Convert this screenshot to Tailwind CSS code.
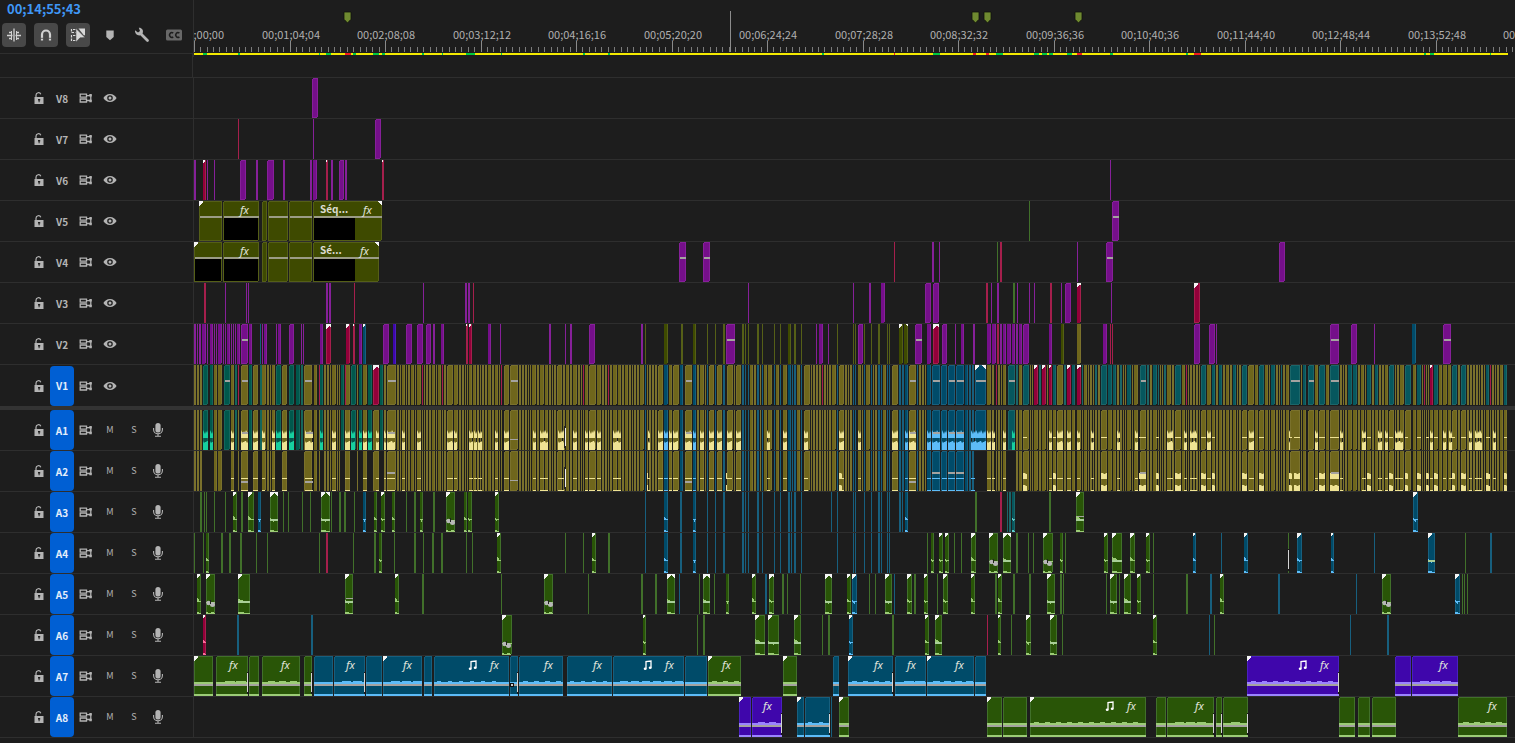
<!DOCTYPE html>
<html lang="fr">
<head>
<meta charset="utf-8">
<title>Timeline</title>
<script src="https://cdn.jsdelivr.net/npm/@tailwindcss/browser@4"></script>
</head>
<body class="min-h-screen overflow-hidden bg-[#1d1d1d] font-['Noto_Sans_CJK_JP','Noto_Sans',sans-serif] text-[#b4b4b4]">

<svg class="hidden">
  <symbol id="i-lock" viewBox="0 0 12 14"><path d="M3 6.500V4.200a2.500 2.500 0 0 1 4.800-1" fill="none" stroke="currentColor" stroke-width="1.200"/><path fill-rule="evenodd" fill="currentColor" d="M1.500 6h9v7h-9zM5 8v1.400h.6v1.800h1V9.400h.6V8z"/></symbol>
  <symbol id="i-sync" viewBox="0 0 14 12"><path d="M1.200 2.200h6.300v3H1.200zM1.200 7h6.300v3H1.200zM7.500 3.700h4.300v4.800H7.500" fill="none" stroke="currentColor" stroke-width="1.300"/><path d="M10.300 2h2.500v2.500h-2.500zM10.300 7.800h2.500v2.500h-2.500z" fill="currentColor"/></symbol>
  <symbol id="i-eye" viewBox="0 0 14 10"><path fill-rule="evenodd" fill="currentColor" d="M7 1C10 1 12.500 3 13.600 5 12.500 7 10 9 7 9S1.500 7 .4 5C1.500 3 4 1 7 1zM7 2.200a2.800 2.800 0 1 0 0 5.600 2.800 2.800 0 0 0 0-5.600z"/><circle cx="7" cy="5" r="1.500" fill="currentColor"/></symbol>
  <symbol id="i-mic" viewBox="0 0 12 16"><rect x="3.400" y="1" width="5.200" height="9.500" rx="2.600" fill="currentColor"/><path d="M1.600 6v1.500a4.400 4.400 0 0 0 8.800 0V6M6 12v2M3 14.300h6" fill="none" stroke="currentColor" stroke-width="1.100"/></symbol>
  <symbol id="i-note" viewBox="0 0 10 11"><path d="M3 8.500V1.500l5-.5v6.500" fill="none" stroke="currentColor" stroke-width="1.300"/><ellipse cx="2.200" cy="8.800" rx="1.500" ry="1.200" fill="currentColor"/><ellipse cx="7.200" cy="7.800" rx="1.500" ry="1.200" fill="currentColor"/></symbol>
  <symbol id="i-pin" viewBox="0 0 9 13"><path d="M1 1h7v7.200L4.500 12 1 8.200z" fill="currentColor" stroke="#10130a" stroke-width=".8"/></symbol>
</svg>

<main>
  <div class="flex h-[54px]">
    <div class="w-[193px] shrink-0 border-b border-[#2e2e2e]">
      <div class="h-[23px] pl-[7px] text-[13px] leading-[18px] font-bold text-[#3f97f5]">00;14;55;43</div>
      <div class="flex gap-2 pl-0.5">
        <button aria-label="Insert as nest" class="grid size-6 place-items-center rounded bg-[#484848] text-[#d2d2d2]"><svg class="size-4" viewBox="0 0 16 16" fill="none" stroke="currentColor"><path d="M8 1.500v13" stroke-width="1.300"/><path d="M3 5.500h3M1 8.500h5.500M3 11.500h3M10 5.500h3M9.500 8.500H15M10 11.500h3" stroke-width="1.300"/><path d="M5.500 4v9M10.500 4v9" stroke-width="1"/></svg></button>
        <button aria-label="Snap" class="grid size-6 place-items-center rounded bg-[#484848] text-[#d2d2d2]"><svg class="size-4" viewBox="0 0 16 16" fill="none" stroke="currentColor" stroke-width="2.200"><path d="M4 13.500V7.500a4 4 0 0 1 8 0v6"/><path d="M2.500 11.300h3M10.500 11.300h3" stroke="#484848" stroke-width=".8"/></svg></button>
        <button aria-label="Linked selection" class="grid size-6 place-items-center rounded bg-[#484848] text-[#d8d8d8]"><svg class="size-4" viewBox="0 0 16 16"><path d="M5.500 2.500h-4v3h4M5.500 8.500h-4v5h4" fill="none" stroke="currentColor" stroke-width="1.200" stroke-dasharray="2.500 1"/><path d="M8.500 1.500H15V8l-1 .5z" fill="currentColor"/><path d="M6 1.500l9 9-5 .3L6 15z" fill="currentColor" stroke="#484848" stroke-width=".5"/></svg></button>
        <button aria-label="Add marker" class="grid size-6 place-items-center"><svg class="size-3" viewBox="0 0 12 12"><path d="M2.300 1.500h7.400V8L6 11.300 2.300 8z" fill="currentColor"/></svg></button>
        <button aria-label="Timeline settings" class="grid size-6 place-items-center"><svg class="size-4" viewBox="0 0 16 16"><path d="M7.500 7.500L13.500 13.500" stroke="currentColor" stroke-width="2.800" stroke-linecap="round"/><path d="M1 3.200l3 2.300L6 4 4.800.8C7.500.5 9.700 3 8.800 5.800 8 8.300 5.500 9 3.500 8 1.700 7 .7 5 1 3.200z" fill="currentColor"/></svg></button>
        <button aria-label="Captions" class="grid size-6 place-items-center text-[#686868]"><svg class="h-3 w-4" viewBox="0 0 16 12"><rect x="0" y=".5" width="16" height="11" rx="1.500" fill="currentColor"/><path d="M7.200 4a2.400 2.400 0 1 0 0 4M13.400 4a2.400 2.400 0 1 0 0 4" fill="none" stroke="#1d1d1d" stroke-width="1.600"/></svg></button>
      </div>
    </div>
    <div id="ruler" class="relative h-[57px] flex-1 overflow-hidden border-l border-[#2e2e2e] text-[11px] leading-[14px] text-[#b0b0b0]"></div>
  </div>
  <div class="flex h-6 border-b border-[#2e2e2e]"><div class="w-[193px] shrink-0 border-r border-[#2e2e2e]"></div></div>
  <div id="tracks"></div>
</main>

<script>
const START = 194;
const COLORS = {
  p: ['#750f8a', '#862099', '#a050b0'], r: ['#93003a', '#a51f4c', '#ff6a9a'],
  t: ['#00584c', '#14665c', '#17cf9f'], k: ['#06575e', '#1b6669', '#5cc8c8'],
  y: ['#6f661c', '#7a712c', '#efe394'], b: ['#004b69', '#175f7e', '#5dbcf8'],
  g: ['#295507', '#41702a', '#9ccc76'], o: ['#3e4a00', '#555f17', '#9a9a70'],
  v: ['#3f06ab', '#4a20c0', '#9b83ff'], x: ['#1d1d1d', '#1d1d1d', '#1d1d1d']
};
// Clip notation: colour, start, width, then marks:
// - level line, / and \ corner handles, ~ waveform, q keyframes, T title bar, B black picture, A full audio, f fx, m music, | fade
const V1 = 't203,5 t210,3 y218,4 t224,6- t235,2 r238 y241,7- t249,3 y253,5 t260,2 y262,4 y272,3 t276,5 y282,5 t289,5 t296,4 t301,2 y304,8- y314,3 r319 t320,3 y332,4 t341,3 r345 y346,4 t351,5 t359,3 y363,4 t368,4 r373,6/\\ t380,3 y384,2 y387,9- y402,3 y417,4 r422 r442 y447,6 y454,4 y469,3 y495,3 r501 y504,5 y510,8- y532,4 y540,4 y545,3 y557,5 y573,4 r583 y585,3 y589,7 y597,4 r608 y613,4 y618,3 b645 y658,5 b664,4 y669,3 y673,6 b680,3 y685,7- b693,3 y700,4 b707 y709,5 b715 y717,5 b723,2 y727,6 y736,5 b742,2 b745 b748 b757,2 b762 y768,4 b774 b780 y783,4 b788,3 b792 b794,2 b801 y804,6 r822 b837 y839,5 b853 b855 y858,3 b864 b871 b878,2 b881 b887 b889 y892,6 b899,2 b902,2 b905,3 y909,7- b917 b927,4 b932,8- b941,6 b948,7- b956,8- b965,3 b969,2 b972,2 b975,11-/\\ y987,4 y992,2 r996 y1003,3 t1008,7- t1016,2 t1023,6 r1034,4/ t1039,2 r1042,4/ r1049,3/ t1053,3 y1057,6 t1064,2 r1067,4/ t1072,3 r1077,4/\\ t1082 t1095,2 t1101,6 t1108,4 t1113,3 t1120,2 t1127,4 y1134,4 t1140,6- t1147,2 t1153,4 t1158 t1164,2 y1167,4 t1175,6 r1186 t1201,5 y1207,4 t1212,3 t1219,3 t1233,3 t1242,5 y1248,6 t1259,5 t1271,4 t1281 t1290,10- t1303,3 t1308,6- t1319,6 t1330,9- t1348,4 t1353,4 t1367,4 t1375,3 t1389,5 t1405,6 y1413,3 t1417,4 r1424 r1430,3/ t1434,4 y1443,4 t1452,5 t1461,5 t1486,3 r1490 t1504,3';
const A1W = 't203,5 t210,3 y231,3 y241,7- y253,5 y262,3 y272,3 t276,5 y282,5 t289,5 y305,8- t320,3 y332,4 y345,5 t351,4 t359,3 y363,4 t368,4 y376,3 y384,2 y387,8- y402,3 y417,4 y447,6 y454,3 y469,4 y474,3 y478,4 y495,3 y504,5 y533,3 y540,8 y558,6 y573,4 y585,3 y589,6 y597,4 y613,8 y648,2 y658,5 b664,4 y669,3 y673,5 y685,7- b693,3 y700,4 y709,5 y717,5 y727,5 y736,5 y767,3 y783,4 y804,4 y839,5 y858,3 y892,6 b905,3 y909,7- b927,4 b932,8- b942,5 b948,7- b956,8- b971,15 y987,4 y992,3 y1003,3 t1012,3 y1049,3 y1057,6 y1067,4 y1077,3 y1091,3 y1117,3 y1135,3 y1167,6 y1184,3 y1190,7 y1207,4 y1249,5 y1289,1 y1315,3 y1340,3 y1362,4 y1378,4 y1385,3 y1395,8 y1430,3 y1443,3 y1449,3 y1469,3 y1475,7 y1493,3';
const A2W = 'y647,1 y726,1 y839,3 y1023,4 y1053,3 y1101,6 y1139,7- y1156,3 y1175,6 y1201,5 y1212,3 y1242,5 y1259,5 y1289,3 y1294,6 y1319,6 y1330,9- y1367,4 y1389,4 y1405,3 y1417,4 y1426,3 y1434,4 y1452,3 y1461,5 y1486,4 y1504,3';
const SHARED_B = 'b645 b664,4~ b680,2 b693,3~ b707 b715 b723,2 b742,2 b745 b748 b757,2 b762 b774 b780 b788,2 b791 b794,2 b801 b837 b853 b855 b864 b871 b878,2 b881 b887 b889 ';
const TRACKS = {
  V8: 'p312,6', V7: 'r238 p313 p375,6',
  V6: 'p194,2 r203,3/ p207 p214 p240,6 p256,2 p267,7 p283,2 p310,2 p313,4 r326,2/ p331,2 p339,5 p345,2 r382,2/ p1110',
  V5: 'o199,23T/ o223,36TBf o262,5 o268,20T o289,23T o313,69TCf\\ g1029 p1112,7-',
  V4: 'o194,28TB/ o223,36TBf o262,5 o268,20T o289,23T o313,66TCf\\ p679,7- p703,7- r894 p932,2 p939 g997 r1000,2 p1077 p1106,7- p1279,6',
  V3: 'r204,2 p225 p246 p248 p326,2 p329,2 r354 p423 p465,2 p468,2 r473 p748 p853 p869,2 p881,4 p925,6 p933,6 r986,2 p991 p997,2 g1013,2 p1017 p1029 p1034 r1050,2 p1061 p1065,6 r1077,4/\\ p1111 r1194,6/',
  V2: 'p194,2 p197 p199,2 p202,4 p207 p210,3 p214 p216 p218,4 p223 p225 p227,3 p231 p233 p235 p237,3 p241,7- p249,3 b260 p262 p264,3 p276 p278,3 p289,5 p301 p303 p320,3 r326,5/\\ r346,4/ r353,2/ p359,3 b363,3/ p383,6 v393,3 p406,6 p417,6 p426,5 p433,2 p441,3 r466,2/ r469,3/ p488,3 p500 p549,2 p565 p570,2 p589,6 p641,2 o645 o664,4 o681,2 o693,3 o707 o715 o723,2 p726,9- o742,2 o745 o748 o757,2 o762 o774 o780 o788,3 o794,2 o801 p816 p819,4 p828 o837 o853 o855 p858,5 o864 o871 o878,2 o887 o889 o899,4/ o904,4\\ p915,7- p927,4 r933,6/\\ p942,5 p955 p961,3 p973,2 p987,4 p992,4 r997,2 p1000,2 p1003,3 p1007,4 p1012,3 p1016,2 p1019,3 p1023,6 p1049,3 o1061,3 y1077,4 p1103,4 r1110 r1112 p1194,6 p1209,6 p1216 p1330,9- p1351,6 p1374 b1412,4 p1443,8-',
  V1: '', A1: '', A2: '',
  A3: SHARED_B + 'g200,2 g204 g206 g214 g225 g233,4~/ g241,2 g248,6~/ b258,3~ g270,8~/\\ g283 g288 g302 g310 g321,9~/\\ g331 g339,2 g344,2 g354 b363,3~ g374,3~ g381,4~/ g392,3~ g406 g414,2 g420,3~ g433,2 g446,9q/ g464,3~ g468,4~ g495,4~/ b831 b899,2 b902 b905,3~ g975,2 r1000,2 k1007 k1009,2 k1012,3~ g1049,2 g1076,8~-/ b1413,5~/',
  A4: SHARED_B + 'g194 g203 g206,3~ g221,2 g229,2 g240,2 g256 g267 g319 r326,2 g353 g374,2 g379,3~ g394 g414,2 g423 g432,2 g441,2 g466 g472 g497,4~/ g565 g583 g592,4~/ g608,2 g927 g931,3~ g939,4~/ g945,4~/ g954 g961 g971,5~/ g989,9q/ g1003,8~/\\ g1016,2 g1028 g1033 g1043,10q/ g1060,3~ g1065 g1104,4~/ g1112,10~/ g1130,5~/ g1146,4~/ g1153 b1193,3~/ b1221 b1244,4~/ g1288,1| b1297,5~/ b1331,3~/ b1374 b1428,7~/ g1465 b1490,2',
  A5: 'g197,4~/ g206,9q/ g238,12~/ g345,8~-/ g395,4~/ g422,2 g501 g544,9q/ g588 g641,2 g655,2 g667,8~/\\ b679 g699 g703,7~/\\ g714 g726,3~ g752,4~/ b765,2 g769,5~/\\ g782,2 g787 g800 g825,7~/\\ g847,4~/ b852,5~/ g869 g875 g885,7~/ b894 g907,5~/ g914,2 g924,4~/ g937 g943,5~/ g971,4~/ g995,2 g998,4~/ g1013,2 g1029,2 g1047,8~/ g1060,2 g1063 g1106 g1110,7~/ g1119 g1124,7~/ g1137,4~/ g1153 g1186,2 b1210,2 g1220,4~/ b1278,2 b1356 g1382,9q/ b1455,5~/ g1462 g1464 g1467',
  A6: 'r203,3~/ b237,2 b311,2 g502,10q/ g643,3~/ g697 g703,2 g755,10~/ g768,11~/ g794,7~/ g822 g828,2 b849,4~/ g892,2 g925,4~/ g935,7~/ r987 g998,3~/ g1011 g1026,5~/ g1050,7~/ g1062 g1153,4~/ b1209 g1214 b1350 b1387,2',
  A7: 'g194,19A/ g216,32Af| g249,10A g262,38Af g304,8A| b314,19A b334,31Af| b366,16A b383,39Af/ b424,8A b434,75Afm b510,8Aq| b519,44Af b567,45Af b613,71Afm b685,22A g708,33Af/ g783,14A/ b833,6A b848,45Af/| b895,31Af b927,47Af/ b975,11A v1247,92Afm/| v1395,16A v1412,46Af',
  A8: 'v739,12A/ v752,30Af| b797,7A/ b805,25A| b831,1 g839,10A/ g987,15A/ g1003,24A g1030,116Afm/ g1156,10A g1167,47Af| g1216,6A| g1223,25A| g1339,16A g1358,12A g1372,24A g1458,49Af'
};
const parse = s => [...s.matchAll(/([a-z])(\d+)(?:,(\d+))?(\S*)/g)].map(m => ({c: m[1], x: +m[2], w: +(m[3] || 1), f: m[4]}));
const rect = (x, y, w, h, c, rx = 0) => `<rect x="${x}" y="${y}" width="${w}" height="${h}" fill="${c}" rx="${rx}"/>`;
const GREY = '#a5a3a0';

function drawClip(k) {
  const [fill, edge, light] = COLORS[k.c], x = k.x - START, w = k.w, f = k.f;
  let s = rect(x, 0, w, 40, edge, w > 3 ? 2 : 0);
  if (w > 2) s += rect(w > 4 ? x + 1 : x, w > 4 ? 1 : 0, w > 4 ? w - 2 : w - 1, w > 4 ? 38 : 40, fill, w > 3 ? 1 : 0);
  if (/B/.test(f)) s += rect(x + 1, 17, w - 2, 22, '#000');
  if (/C/.test(f)) s += rect(x + 1, 17, 41, 22, '#000');
  if (/T/.test(f)) s += rect(x + 1, 15, w - 1, 2, '#9b9c86');
  if (/-/.test(f)) s += rect(x + 1, /~/.test(f) ? 24 : 15, w - 1, /~/.test(f) ? 1 : 2, GREY);
  if (/~/.test(f)) {
    s += rect(x, 27, w, 1, light) + rect(x, 39, w, 1, light);
    if (w > 2) s += `<path fill="${light}" d="M${x} 27v-${1 + k.x % 3}l${w / 2} 2v2zM${x} 40v-2l${w} 1v1z"/>`;
    if (w > 6) s += rect(x, 27, w, 2, '#a9cf98');
  }
  if (/A/.test(f)) {
    s += rect(x, 26, w, 2, light) + rect(x, 28, w, 2, GREY) + rect(x, 38, w, 2, light);
    if (w > 24) for (let i = 3 + k.x % 7; i < w - 6; i += 11) s += rect(x + i, 25, 4 + (i * 7 + k.x) % 7, 1, light);
  }
  if (/q/.test(f) && k.c === 'b') s += `<circle cx="${x + 2}" cy="29" r="2" fill="#ccc" stroke="#111"/>`;
  if (/q/.test(f) && k.c === 'g') s += rect(x, 28, w, 1, light) + `<path fill="${light}" d="M${x} 40v-2l3 1 3-1 3 1v1z"/><g shape-rendering="geometricPrecision"><circle cx="${x + 2.5}" cy="29" r="2.200" fill="#b8b8b8"/><circle cx="${x + 6.5}" cy="30.500" r="2.500" fill="#b8b8b8"/><path d="M${x + 4.5} 26v4" stroke="#222"/></g>`;
  if (/\//.test(f)) { const n = Math.min(4, w - 1); s += `<path fill="#f4f4f4" d="M${x} 0h${n}v1l-${n} ${n}z"/>`; }
  if (/\\/.test(f)) { const n = Math.min(4, w / 2); s += `<path fill="#f4f4f4" d="M${x + w} 0h-${n}v1l${n} ${n}z"/>`; }
  if (/\|/.test(f)) s += rect(x + w - 1, 16, 2, 22, '#1a1a1a') + rect(x + w - 1, 17, 1, 19, '#d4d4d4');
  return s;
}
const PATTERN = [2, 2, 1, 2, 3, 2, 1, 2, 2, 3, 1, 2, 2];
function denseClips(track) {
  const out = []; let cur = START, n = 0;
  for (const k of [...parse(V1), {c: 'x', x: 1508, w: 0, f: ''}]) {
    while (cur < k.x - 1) {
      let w = Math.min(PATTERN[n++ % PATTERN.length], k.x - 1 - cur);
      if (k.x - 1 - cur - w === 1) w++;
      out.push({c: 'y', x: cur, w, f: ''}); cur += w + 1;
    }
    if (k.w) {
      const c = {...k};
      if (track !== 'V1') {
        c.f = '';
        if (c.c === 'r' || (c.c === 't' && k.x > 1015)) c.c = 'y';
        if (track === 'A2' && (c.c === 't' || k.x === 975)) c.c = 'x';
      }
      if (c.c === 't' && k.x > 900) c.c = 'k';
      out.push(c);
    }
    cur = Math.max(cur, k.x + k.w + 1);
  }
  return out;
}
function wave(k, low) {
  const x = k.x - START, col = COLORS[k.c][2], h = i => (k.x * 5 + i * 7) % 5;
  let up = `M${x} 28`, dn = `M${x} 40`;
  for (let i = 0; i <= k.w; i++) {
    up += `L${x + i} ${low ? 22 + h(i) % 2 : 20 + h(i)}`;
    dn += `L${x + i} ${low ? 34 + h(i) % 2 : 31 + h(i) % 3}`;
  }
  let s = `<path shape-rendering="geometricPrecision" fill="${col}" d="${up}V28z${dn}V40z"/>`;
  if (/-/.test(k.f)) s += rect(x + 1, low ? 21 : 22, k.w - 1, 2, GREY);
  return s;
}
function laneMarkup(name) {
  if (!['V1', 'A1', 'A2'].includes(name)) return parse(TRACKS[name]).map(drawClip).join('');
  const clips = denseClips(name);
  let s = clips.map(drawClip).join('');
  if (name === 'A1') {
    s += parse(A1W).map(k => wave(k)).join('') + parse(A2W).filter(k => k.x > 1000).map(k => rect(k.x - START, 27, k.w, 1, '#efe394')).join('');
  }
  if (name === 'A2') {
    s += parse(A1W).filter(k => k.c !== 't').map(k => rect(k.x - START, 27, k.w, 1, COLORS[k.c][2]) + rect(k.x - START, 39, k.w, 1, COLORS[k.c][2]) + (/-/.test(k.f) ? rect(k.x - START, k.x < 380 || k.x === 909 || k.x === 685 ? 30 : 21, k.w, 2, GREY) : '')).join('');
    s += rect(975 - START, 0, 12, 40, '#1d1d1d') + rect(1006 - START, 0, 10, 40, '#1d1d1d') + parse(A2W).map(k => wave(k, true)).join('');
  }
  if (name !== 'V1') s += rect(564 - START, 16, 2, 22, '#222') + rect(565 - START, 18, 1, 18, '#eee') + rect(510 - START, 29, 8, 1, GREY);
  return s;
}
function labels(name) {
  let s = '';
  for (const k of parse(TRACKS[name])) {
    const end = k.x + k.w - START;
    if (/f/.test(k.f)) s += `<span class="absolute top-px font-['Noto_Sans'] text-[11px] leading-4 italic text-[#e0e4dc]" style="left:${end - 19}px">fx</span>`;
    if (/m/.test(k.f)) s += `<svg class="absolute top-1 h-[11px] w-2.5 text-white" style="left:${end - 41}px"><use href="#i-note"/></svg>`;
    if (/C/.test(k.f)) s += `<span class="absolute top-0 text-[10px] leading-4 font-bold text-[#dcdcd0]" style="left:${k.x - START + 7}px">${name === 'V5' ? 'Séq...' : 'Sé...'}</span>`;
  }
  return s;
}
const icon = (id, cls, label) => `<button aria-label="${label}" class="grid place-items-center ${cls}"><svg class="h-3.5 w-3.5"><use href="#${id}"/></svg></button>`;
document.getElementById('tracks').innerHTML = Object.keys(TRACKS).map(name => {
  const audio = name[0] === 'A', on = audio || name === 'V1';
  return `<section class="flex h-[41px] border-b ${name === 'V1' ? 'box-content border-b-4 border-[#333333]' : 'border-[#2e2e2e]'}">
    <div class="flex w-[193px] shrink-0 items-center pl-8">
      ${icon('i-lock', 'w-3.5 mr-1', 'Lock ' + name)}
      <button class="mr-1 h-10 w-6 rounded text-center text-[10px] font-bold ${on ? 'bg-[#005fd3] text-[#e4eefb]' : ''}">${name}</button>
      ${icon('i-sync', 'w-4 mr-1', 'Sync lock ' + name)}
      ${audio ? `<button class="w-6 text-[9px]">M</button><button class="w-6 text-[9px]">S</button><button aria-label="Record ${name}" class="grid w-6 place-items-center"><svg class="h-4 w-3"><use href="#i-mic"/></svg></button>` : icon('i-eye', 'w-6', 'Show ' + name)}
    </div>
    <div class="relative flex-1 overflow-hidden border-l border-[#2e2e2e]">
      <svg class="block h-10 w-full" shape-rendering="crispEdges">${laneMarkup(name)}</svg>${labels(name)}
    </div>
  </section>`;
}).join('');

const times = ['00;00;00;00','00;01;04;04','00;02;08;08','00;03;12;12','00;04;16;16','00;05;20;20','00;06;24;24','00;07;28;28','00;08;32;32','00;09;36;36','00;10;40;36','00;11;44;40','00;12;48;44','00;13;52;48','00;14;56;52'];
const STEP = 95.5;
let ticks = '';
for (let i = 0; i < 15 * 15; i++) {
  const x = Math.round(i * STEP / 15), major = i % 15 === 0;
  ticks += rect(x, major ? 41 : 47, 1, major ? 11 : 5, major ? '#8a8a8a' : '#7c7c7c');
}
ticks += rect(0, 53, 1314, 2, '#f4ea00');
const status = 'g203,4 g238,2 g319 g326,5 r345,6 g353,3 g373,6 g382,3 g422,2 g442 g466,9 g501 g583,2 g608,2 g822,2 r894 g933,7 r973,3 r986,3 g996,7 g1034,5 g1042,5 g1049,4 g1067,5 r1077,5 g1110,3 g1186,2 r1194,7 g1424,2 g1430,4 g1490';
ticks += parse(status).map(k => rect(k.x - START, 53, k.w, 2, k.c === 'g' ? '#00c840' : '#f01c1c')).join('');
ticks += rect(730 - START, 11, 1, 41, '#8c8c8c');
document.getElementById('ruler').innerHTML = `<svg class="absolute inset-0 size-full" shape-rendering="crispEdges">${ticks}</svg>`
  + times.map((t, i) => `<span class="absolute top-[27px] w-20 text-center" style="left:${Math.round(i * STEP) - 39}px">${t}</span>`).join('')
  + [347, 975, 987, 1078].map(x => `<svg class="absolute top-[11px] h-[13px] w-[9px] text-[#6f8a30]" style="left:${x - START - 4}px"><use href="#i-pin"/></svg>`).join('');
</script>
</body>
</html>
